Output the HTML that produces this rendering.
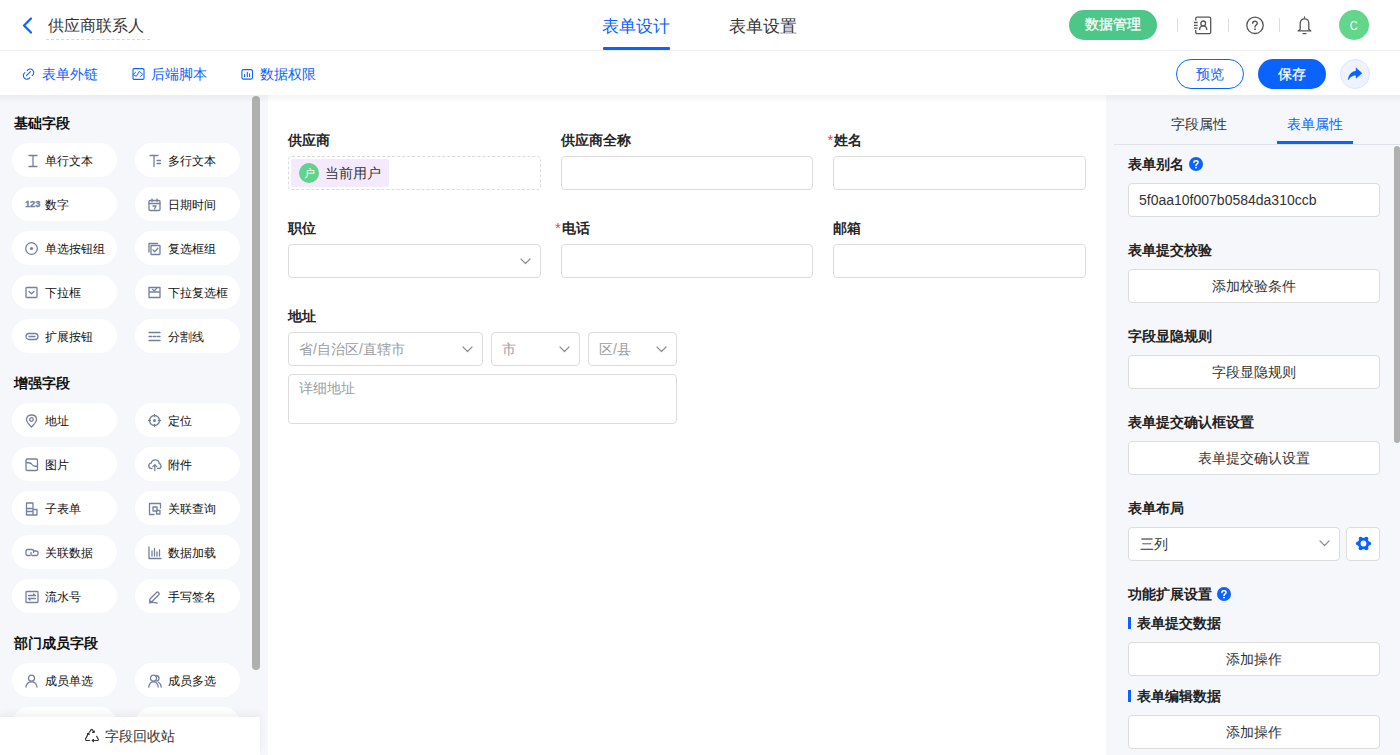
<!DOCTYPE html>
<html><head><meta charset="utf-8">
<style>
*{box-sizing:border-box;margin:0;padding:0}
html,body{width:1400px;height:755px;overflow:hidden;background:#fff;font-family:"Liberation Sans",sans-serif;color:#333}
.a{position:absolute}
svg{display:block;overflow:visible}
.nw{white-space:nowrap}
.blue{color:#0a62ff}
.sep{width:1px;height:14px;background:#dddddd;top:18px}
.sec{font-size:14px;font-weight:bold;color:#111;left:14px;line-height:18px;white-space:nowrap}
.pill{width:105px;height:34px;border-radius:17px;background:#fff}
.ptx{font-size:12.2px;line-height:16px;color:#111;white-space:nowrap}
.lab{font-size:14px;font-weight:bold;color:#262626;line-height:18px;white-space:nowrap}
.req{color:#e8463f;font-weight:normal;display:inline-block;width:6.5px;font-size:15px}
.inp{height:34px;border:1px solid #dcdcdc;border-radius:4px;background:#fff}
.ph{font-size:14px;line-height:18px;color:#9a9da3;white-space:nowrap}
.rl{font-size:14px;font-weight:bold;color:#222;left:1128px;line-height:18px;white-space:nowrap}
.rbtn{left:1128px;width:252px;height:34px;border:1px solid #dddddd;border-radius:4px;background:#fff;font-size:14px;line-height:32px;text-align:center;color:#333}
</style></head><body>

<div class="a" style="left:0;top:0;width:1400px;height:51px;background:#fff;border-bottom:1px solid #eceef2"></div>
<svg class="a" style="left:21px;top:17px" width="12" height="17" viewBox="0 0 12 17"><path d="M10 1.5 L3 8.5 L10 15.5" fill="none" stroke="#0a62ff" stroke-width="2.2" stroke-linecap="round" stroke-linejoin="round"/></svg>
<div class="a nw" style="left:48px;top:16px;font-size:16px;line-height:20px;color:#333">供应商联系人</div>
<div class="a" style="left:46px;top:39px;width:104px;height:0;border-top:1px dashed #d4d7dd"></div>
<div class="a nw blue" style="left:602px;top:17px;font-size:17px;line-height:20px">表单设计</div>
<div class="a" style="left:603px;top:47px;width:67px;height:3px;border-radius:1px;background:#0a62ff"></div>
<div class="a nw" style="left:729px;top:17px;font-size:17px;line-height:20px;color:#333">表单设置</div>
<div class="a" style="left:1069px;top:10px;width:88px;height:30px;border-radius:15px;background:#4cc788;color:#fff;font-size:14px;line-height:29px;text-align:center;-webkit-text-stroke:0.3px #fff">数据管理</div>
<div class="a sep" style="left:1177px"></div>
<div class="a sep" style="left:1228px"></div>
<div class="a sep" style="left:1279px"></div>
<svg class="a" style="left:1193px;top:16px" width="19" height="19" viewBox="0 0 19 19"><path d="M2.75 4.5 V2.5 C2.75 1.7 3.4 1.1 4.2 1.1 H16.3 C17.1 1.1 17.7 1.7 17.7 2.5 V16.3 C17.7 17.1 17.1 17.7 16.3 17.7 H4.2 C3.4 17.7 2.75 17.1 2.75 16.3 V14" fill="none" stroke="#555" stroke-width="1.3"/><circle cx="10.2" cy="7.4" r="2.4" fill="none" stroke="#555" stroke-width="1.3"/><path d="M6.6 14 C6.6 11.3 8.2 9.9 10.2 9.9 C12.2 9.9 13.8 11.3 13.8 14" fill="none" stroke="#555" stroke-width="1.3"/><path d="M1 6.5h3.6M1 9.4h3.6M1 12.2h3.6" stroke="#555" stroke-width="1.3"/></svg>
<svg class="a" style="left:1245px;top:16px" width="19" height="19" viewBox="0 0 19 19"><circle cx="10" cy="9.3" r="8.2" fill="none" stroke="#555" stroke-width="1.3"/><path d="M7.7 7.3 C7.7 4.6 12.3 4.6 12.3 7.2 C12.3 8.9 10 9.1 10 11" fill="none" stroke="#555" stroke-width="1.4" stroke-linecap="round"/><circle cx="10" cy="13.2" r="0.9" fill="#555"/></svg>
<svg class="a" style="left:1297px;top:16px" width="17" height="19" viewBox="0 0 17 19"><path d="M7.5 0.9 V1.8" stroke="#555" stroke-width="1.3" stroke-linecap="round"/><path d="M3.2 13.3 V7.2 C3.2 4.6 5.1 2.8 7.5 2.8 C9.9 2.8 11.8 4.6 11.8 7.2 V13.3 L13.9 14.9 H1.1 Z" fill="none" stroke="#555" stroke-width="1.3" stroke-linejoin="round"/><path d="M6 17.6 H9" stroke="#555" stroke-width="1.3" stroke-linecap="round"/></svg>
<div class="a" style="left:1339px;top:10px;width:30px;height:30px;border-radius:50%;background:#62d68a;color:#fff;font-size:13px;line-height:32px;text-align:center"><span style="display:inline-block;transform:scaleX(0.85)">C</span></div>
<svg class="a" style="left:22px;top:67px" width="13" height="13" viewBox="0 0 13 13"><path d="M5.2 3.6 A3.6 3.6 0 1 1 10.2 8.6 M2.9 5.6 A3.6 3.6 0 1 0 7.9 10.6 M4.5 8.6 L8.4 4.7" fill="none" stroke="#0a62ff" stroke-width="1.1" stroke-linecap="round"/></svg>
<div class="a nw blue" style="left:42px;top:65px;font-size:14px;line-height:18px">表单外链</div>
<svg class="a" style="left:132px;top:67px" width="13" height="13" viewBox="0 0 13 13"><rect x="1" y="1.6" width="11" height="10.8" rx="1.2" fill="none" stroke="#0a62ff" stroke-width="1.1"/><path d="M3.6 5.2 L1.3 7.4 L4.2 9.4 L7.4 4.3 L10.8 7.4 L8.5 9.4" fill="none" stroke="#0a62ff" stroke-width="1" stroke-linecap="round" stroke-linejoin="round"/></svg>
<div class="a nw blue" style="left:151px;top:65px;font-size:14px;line-height:18px">后端脚本</div>
<svg class="a" style="left:241px;top:67px" width="13" height="13" viewBox="0 0 13 13"><rect x="0.9" y="2.6" width="10.6" height="9.5" rx="1.6" fill="none" stroke="#0a62ff" stroke-width="1.1"/><path d="M3.6 7.5 V9.6 M6.3 5.4 V9.6 M8.6 6.7 V9.6" fill="none" stroke="#0a62ff" stroke-width="1.1" stroke-linecap="round"/></svg>
<div class="a nw blue" style="left:260px;top:65px;font-size:14px;line-height:18px">数据权限</div>
<div class="a" style="left:1176px;top:59px;width:68px;height:30px;border-radius:15px;border:1px solid #0a62ff;background:#fff;color:#0a62ff;font-size:14px;line-height:28px;text-align:center">预览</div>
<div class="a" style="left:1258px;top:59px;width:68px;height:30px;border-radius:15px;background:#0a62ff;color:#fff;font-size:14px;line-height:30px;text-align:center;-webkit-text-stroke:0.3px #fff">保存</div>
<div class="a" style="left:1340px;top:59px;width:30px;height:30px;border-radius:50%;background:#eef3ff;border:1px solid #dbe6ff"></div>
<svg class="a" style="left:1347px;top:66px" width="16" height="16" viewBox="0 0 16 16"><path d="M9 1.7 L15 7.3 L9 12.3 V9.2 C5.5 9.2 3 10.8 1.2 14 C1.5 8.8 4.5 5.8 9 5.1 Z" fill="#0a62ff" stroke="#0a62ff" stroke-width="0.4" stroke-linejoin="round"/></svg>
<div class="a" style="left:0;top:95px;width:268px;height:660px;background:#f5f7fa"></div>
<div class="a sec" style="top:114px">基础字段</div>
<div class="a pill" style="left:12px;top:143px"></div>
<svg class="a" style="left:25px;top:153.6px" width="14" height="14" viewBox="0 0 14 14"><path d="M4 1.5h8M4 12.5h8M8 1.5v11" fill="none" stroke="#74809d" stroke-width="1.3" stroke-linecap="round" stroke-linejoin="round"/></svg>
<div class="a ptx" style="left:45px;top:152.6px">单行文本</div>
<div class="a pill" style="left:135px;top:143px"></div>
<svg class="a" style="left:148px;top:153.6px" width="14" height="14" viewBox="0 0 14 14"><path d="M2 1.5h8M6 1.5v11M9 6.5h3.5M9 9.5h3.5" fill="none" stroke="#74809d" stroke-width="1.3" stroke-linecap="round" stroke-linejoin="round"/></svg>
<div class="a ptx" style="left:168px;top:152.6px">多行文本</div>
<div class="a pill" style="left:12px;top:187px"></div>
<svg class="a" style="left:25px;top:197.6px" width="14" height="14" viewBox="0 0 14 14"></svg>
<div class="a ptx" style="left:45px;top:196.6px">数字</div>
<div class="a pill" style="left:135px;top:187px"></div>
<svg class="a" style="left:148px;top:197.6px" width="14" height="14" viewBox="0 0 14 14"><rect x="1" y="2.5" width="11" height="10" rx="1" fill="none" stroke="#74809d" stroke-width="1.3" stroke-linecap="round" stroke-linejoin="round"/><path d="M1 5.5h11M4 1v2.5M9 1v2.5M5 8h3l-1.5 3" fill="none" stroke="#74809d" stroke-width="1.3" stroke-linecap="round" stroke-linejoin="round"/></svg>
<div class="a ptx" style="left:168px;top:196.6px">日期时间</div>
<div class="a pill" style="left:12px;top:231px"></div>
<svg class="a" style="left:25px;top:241.6px" width="14" height="14" viewBox="0 0 14 14"><circle cx="6.5" cy="6.5" r="5.8" fill="none" stroke="#74809d" stroke-width="1.3" stroke-linecap="round" stroke-linejoin="round"/><circle cx="6.5" cy="6.5" r="1.6" fill="#74809d"/></svg>
<div class="a ptx" style="left:45px;top:240.6px">单选按钮组</div>
<div class="a pill" style="left:135px;top:231px"></div>
<svg class="a" style="left:148px;top:241.6px" width="14" height="14" viewBox="0 0 14 14"><path d="M1 10V1.5h8.5" fill="none" stroke="#74809d" stroke-width="1.3" stroke-linecap="round" stroke-linejoin="round"/><rect x="3" y="3.5" width="9" height="9" rx="0.5" fill="none" stroke="#74809d" stroke-width="1.3" stroke-linecap="round" stroke-linejoin="round"/><path d="M5 8l1.7 1.7 3.2-3.5" fill="none" stroke="#74809d" stroke-width="1.3" stroke-linecap="round" stroke-linejoin="round"/></svg>
<div class="a ptx" style="left:168px;top:240.6px">复选框组</div>
<div class="a pill" style="left:12px;top:275px"></div>
<svg class="a" style="left:25px;top:285.6px" width="14" height="14" viewBox="0 0 14 14"><rect x="1" y="1.5" width="11" height="10" rx="0.8" fill="none" stroke="#74809d" stroke-width="1.3" stroke-linecap="round" stroke-linejoin="round"/><path d="M4 5.5l2.5 2.3 2.5-2.3" fill="none" stroke="#74809d" stroke-width="1.3" stroke-linecap="round" stroke-linejoin="round"/></svg>
<div class="a ptx" style="left:45px;top:284.6px">下拉框</div>
<div class="a pill" style="left:135px;top:275px"></div>
<svg class="a" style="left:148px;top:285.6px" width="14" height="14" viewBox="0 0 14 14"><path d="M1 1.5h11v4.5H1z M1 6v5.5h11V6" fill="none" stroke="#74809d" stroke-width="1.3" stroke-linecap="round" stroke-linejoin="round"/><path d="M4.5 3.5l2 1.3 2-2.5" fill="none" stroke="#74809d" stroke-width="1.3" stroke-linecap="round" stroke-linejoin="round"/></svg>
<div class="a ptx" style="left:168px;top:284.6px">下拉复选框</div>
<div class="a pill" style="left:12px;top:319px"></div>
<svg class="a" style="left:25px;top:329.6px" width="14" height="14" viewBox="0 0 14 14"><rect x="1" y="3.5" width="12" height="6" rx="3" fill="none" stroke="#74809d" stroke-width="1.3" stroke-linecap="round" stroke-linejoin="round"/><path d="M4 6.5h6" fill="none" stroke="#74809d" stroke-width="1.3" stroke-linecap="round" stroke-linejoin="round"/></svg>
<div class="a ptx" style="left:45px;top:328.6px">扩展按钮</div>
<div class="a pill" style="left:135px;top:319px"></div>
<svg class="a" style="left:148px;top:329.6px" width="14" height="14" viewBox="0 0 14 14"><path d="M1 2.5h11M1 6.5h3M5.5 6.5h2.5M9.5 6.5h2.5M1 10.5h11" fill="none" stroke="#74809d" stroke-width="1.3" stroke-linecap="round" stroke-linejoin="round"/></svg>
<div class="a ptx" style="left:168px;top:328.6px">分割线</div>
<div class="a sec" style="top:374px">增强字段</div>
<div class="a pill" style="left:12px;top:403px"></div>
<svg class="a" style="left:25px;top:413.6px" width="14" height="14" viewBox="0 0 14 14"><path d="M6.5 13 C2.5 9 1.5 7 1.5 5.5 C1.5 2.5 3.8 1 6.5 1 C9.2 1 11.5 2.5 11.5 5.5 C11.5 7 10.5 9 6.5 13Z" fill="none" stroke="#74809d" stroke-width="1.3" stroke-linecap="round" stroke-linejoin="round"/><circle cx="6.5" cy="5.5" r="1.8" fill="none" stroke="#74809d" stroke-width="1.3" stroke-linecap="round" stroke-linejoin="round"/></svg>
<div class="a ptx" style="left:45px;top:412.6px">地址</div>
<div class="a pill" style="left:135px;top:403px"></div>
<svg class="a" style="left:148px;top:413.6px" width="14" height="14" viewBox="0 0 14 14"><circle cx="6.5" cy="6.5" r="5" fill="none" stroke="#74809d" stroke-width="1.3" stroke-linecap="round" stroke-linejoin="round"/><circle cx="6.5" cy="6.5" r="1.5" fill="#74809d"/><path d="M6.5 0.5v2M6.5 10.5v2M0.5 6.5h2M10.5 6.5h2" fill="none" stroke="#74809d" stroke-width="1.3" stroke-linecap="round" stroke-linejoin="round"/></svg>
<div class="a ptx" style="left:168px;top:412.6px">定位</div>
<div class="a pill" style="left:12px;top:447px"></div>
<svg class="a" style="left:25px;top:457.6px" width="14" height="14" viewBox="0 0 14 14"><rect x="1" y="1" width="11.5" height="11.5" rx="1.2" fill="none" stroke="#74809d" stroke-width="1.3" stroke-linecap="round" stroke-linejoin="round"/><path d="M1.5 4.5 C4 4.5 6 5 7 6.5 C8 8 10 8.5 12 8" fill="none" stroke="#74809d" stroke-width="1.3" stroke-linecap="round" stroke-linejoin="round"/></svg>
<div class="a ptx" style="left:45px;top:456.6px">图片</div>
<div class="a pill" style="left:135px;top:447px"></div>
<svg class="a" style="left:148px;top:457.6px" width="14" height="14" viewBox="0 0 14 14"><path d="M4 10.5H3.5C2 10.5 0.8 9.3 0.8 7.8 C0.8 6.4 1.9 5.3 3.2 5.2 C3.6 3.2 5.3 1.8 7.2 1.8 C9.3 1.8 11 3.4 11.1 5.4 C12.3 5.7 13 6.7 13 7.9 C13 9.3 11.9 10.5 10.5 10.5H9.5M6.8 12.5V6.8M4.8 8.6l2-2 2 2" fill="none" stroke="#74809d" stroke-width="1.3" stroke-linecap="round" stroke-linejoin="round"/></svg>
<div class="a ptx" style="left:168px;top:456.6px">附件</div>
<div class="a pill" style="left:12px;top:491px"></div>
<svg class="a" style="left:25px;top:501.6px" width="14" height="14" viewBox="0 0 14 14"><path d="M1.5 1h6.5v5.5H1.5z M1.5 6.5V13H12V7.5H8V13 M1.5 9.5H8" fill="none" stroke="#74809d" stroke-width="1.3" stroke-linecap="round" stroke-linejoin="round"/></svg>
<div class="a ptx" style="left:45px;top:500.6px">子表单</div>
<div class="a pill" style="left:135px;top:491px"></div>
<svg class="a" style="left:148px;top:501.6px" width="14" height="14" viewBox="0 0 14 14"><path d="M12.5 6V1.5H1.5V12.5H6" fill="none" stroke="#74809d" stroke-width="1.3" stroke-linecap="round" stroke-linejoin="round"/><rect x="5" y="5" width="4" height="4" fill="none" stroke="#74809d" stroke-width="1.3" stroke-linecap="round" stroke-linejoin="round"/><rect x="8.5" y="8.5" width="3.5" height="3.5" fill="none" stroke="#74809d" stroke-width="1.3" stroke-linecap="round" stroke-linejoin="round"/></svg>
<div class="a ptx" style="left:168px;top:500.6px">关联查询</div>
<div class="a pill" style="left:12px;top:535px"></div>
<svg class="a" style="left:25px;top:545.6px" width="14" height="14" viewBox="0 0 14 14"><path d="M5 9.5H2.5C1.7 9.5 1 8.8 1 8V5C1 4.2 1.7 3.5 2.5 3.5H7C7.8 3.5 8.5 4.2 8.5 5V6.5 M6 6.5V8C6 8.8 6.7 9.5 7.5 9.5H11.5C12.3 9.5 13 8.8 13 8V6.5C13 5.7 12.3 5 11.5 5H9" fill="none" stroke="#74809d" stroke-width="1.3" stroke-linecap="round" stroke-linejoin="round"/></svg>
<div class="a ptx" style="left:45px;top:544.6px">关联数据</div>
<div class="a pill" style="left:135px;top:535px"></div>
<svg class="a" style="left:148px;top:545.6px" width="14" height="14" viewBox="0 0 14 14"><path d="M1 1v11.5h12M4 5v5M6.5 2.5v7.5M9 6v4M11.5 4v6" fill="none" stroke="#74809d" stroke-width="1.3" stroke-linecap="round" stroke-linejoin="round"/></svg>
<div class="a ptx" style="left:168px;top:544.6px">数据加载</div>
<div class="a pill" style="left:12px;top:579px"></div>
<svg class="a" style="left:25px;top:589.6px" width="14" height="14" viewBox="0 0 14 14"><rect x="1" y="1.5" width="12" height="11" rx="0.8" fill="none" stroke="#74809d" stroke-width="1.3" stroke-linecap="round" stroke-linejoin="round"/><path d="M3.5 5.5h7M8.5 4l1.5 1.5M3.5 8.5h7M5 10l-1.5-1.5" fill="none" stroke="#74809d" stroke-width="1.3" stroke-linecap="round" stroke-linejoin="round"/></svg>
<div class="a ptx" style="left:45px;top:588.6px">流水号</div>
<div class="a pill" style="left:135px;top:579px"></div>
<svg class="a" style="left:148px;top:589.6px" width="14" height="14" viewBox="0 0 14 14"><path d="M1.5 11.5 L2 9 L8.5 2.5 C9 2 9.8 2 10.3 2.5 L10.8 3 C11.3 3.5 11.3 4.2 10.8 4.7 L4.3 11.2 Z M1.5 13 C4 11.8 7 12.5 9 13" fill="none" stroke="#74809d" stroke-width="1.3" stroke-linecap="round" stroke-linejoin="round"/></svg>
<div class="a ptx" style="left:168px;top:588.6px">手写签名</div>
<div class="a sec" style="top:634px">部门成员字段</div>
<div class="a pill" style="left:12px;top:663px"></div>
<svg class="a" style="left:25px;top:673.6px" width="14" height="14" viewBox="0 0 14 14"><circle cx="6.5" cy="4.2" r="3" fill="none" stroke="#74809d" stroke-width="1.3" stroke-linecap="round" stroke-linejoin="round"/><path d="M1 13 C1.5 9 4 7.8 6.5 7.8 C9 7.8 11.5 9 12 13" fill="none" stroke="#74809d" stroke-width="1.3" stroke-linecap="round" stroke-linejoin="round"/></svg>
<div class="a ptx" style="left:45px;top:672.6px">成员单选</div>
<div class="a pill" style="left:135px;top:663px"></div>
<svg class="a" style="left:148px;top:673.6px" width="14" height="14" viewBox="0 0 14 14"><circle cx="5.5" cy="4.2" r="3" fill="none" stroke="#74809d" stroke-width="1.3" stroke-linecap="round" stroke-linejoin="round"/><path d="M0.8 13 C1.2 9 3.5 7.8 5.5 7.8 C7.5 7.8 9.8 9 10.2 13 M8.5 1.5 C10.3 1.8 11 3 11 4.2 C11 5.6 10 6.8 8.8 7 M10.5 8.2 C12 9 13 10.5 13.2 13" fill="none" stroke="#74809d" stroke-width="1.3" stroke-linecap="round" stroke-linejoin="round"/></svg>
<div class="a ptx" style="left:168px;top:672.6px">成员多选</div>
<div class="a pill" style="left:12px;top:707px"></div>
<div class="a pill" style="left:135px;top:707px"></div>
<div class="a nw" style="left:25px;top:198px;font-size:9.3px;line-height:12px;font-weight:bold;color:#74809d;letter-spacing:-0.1px;-webkit-text-stroke:0.3px #74809d">123</div>
<div class="a" style="left:252px;top:96px;width:8px;height:574px;border-radius:4px;background:#b0b0b0"></div>
<div class="a" style="left:0;top:717px;width:260px;height:38px;background:#fff;box-shadow:0 -3px 8px rgba(0,0,0,0.06)"></div>
<svg class="a" style="left:84px;top:727px" width="16" height="16" viewBox="0 0 16 16"><path d="M5.6 5 L7.1 2.6 C7.4 2.1 8 2.1 8.3 2.6 L9.9 5.3 M8.6 5.4 L10 5.5 L10.4 4.2 M4.6 6.1 L1.6 11.8 C1.3 12.4 1.7 13.5 2.4 13.5 H5.6 M3.4 6.9 L4.7 6.2 L5.3 7.4 M8.4 13.5 H13.6 C14.3 13.5 14.6 12.8 14.3 12.2 L12.6 9.3 M9.4 12.5 L8.3 13.5 L9.4 14.5" fill="none" stroke="#333" stroke-width="1.2" stroke-linecap="round" stroke-linejoin="round"/></svg>
<div class="a nw" style="left:105px;top:727px;font-size:14px;line-height:18px;color:#333">字段回收站</div>
<div class="a" style="left:268px;top:95px;width:838px;height:660px;background:#fff"></div>
<div class="a lab" style="left:288px;top:131px">供应商</div>
<div class="a lab" style="left:561px;top:131px">供应商全称</div>
<div class="a lab" style="left:827.5px;top:131px"><span class="req">*</span>姓名</div>
<div class="a" style="left:288px;top:156px;width:253px;height:34px;border:1px dashed #d9dbe0;border-radius:4px"></div>
<div class="a" style="left:291px;top:159px;width:98px;height:28px;border-radius:2px;background:#f5eafd"></div>
<div class="a" style="left:299px;top:163px;width:20px;height:20px;border-radius:50%;background:#5fd38a;color:#fff;font-size:11px;line-height:20px;text-align:center">户</div>
<div class="a nw" style="left:325px;top:164px;font-size:14px;line-height:18px;color:#333">当前用户</div>
<div class="a inp" style="left:561px;top:156px;width:252px"></div>
<div class="a inp" style="left:833px;top:156px;width:253px"></div>
<div class="a lab" style="left:288px;top:219px">职位</div>
<div class="a lab" style="left:555px;top:219px"><span class="req">*</span>电话</div>
<div class="a lab" style="left:833px;top:219px">邮箱</div>
<div class="a inp" style="left:288px;top:244px;width:253px"></div>
<svg class="a" style="left:520px;top:258px" width="11" height="7" viewBox="0 0 11 7"><path d="M1 1 L5.5 5.5 L10 1" fill="none" stroke="#8c9099" stroke-width="1.2" stroke-linecap="round" stroke-linejoin="round"/></svg>
<div class="a inp" style="left:561px;top:244px;width:252px"></div>
<div class="a inp" style="left:833px;top:244px;width:253px"></div>
<div class="a lab" style="left:288px;top:307px">地址</div>
<div class="a inp" style="left:288px;top:332px;width:195px"></div>
<div class="a ph" style="left:299px;top:340px">省/自治区/直辖市</div>
<svg class="a" style="left:462px;top:346px" width="11" height="7" viewBox="0 0 11 7"><path d="M1 1 L5.5 5.5 L10 1" fill="none" stroke="#8c9099" stroke-width="1.2" stroke-linecap="round" stroke-linejoin="round"/></svg>
<div class="a inp" style="left:491px;top:332px;width:89px"></div>
<div class="a ph" style="left:502px;top:340px">市</div>
<svg class="a" style="left:559px;top:346px" width="11" height="7" viewBox="0 0 11 7"><path d="M1 1 L5.5 5.5 L10 1" fill="none" stroke="#8c9099" stroke-width="1.2" stroke-linecap="round" stroke-linejoin="round"/></svg>
<div class="a inp" style="left:588px;top:332px;width:89px"></div>
<div class="a ph" style="left:599px;top:340px">区/县</div>
<svg class="a" style="left:656px;top:346px" width="11" height="7" viewBox="0 0 11 7"><path d="M1 1 L5.5 5.5 L10 1" fill="none" stroke="#8c9099" stroke-width="1.2" stroke-linecap="round" stroke-linejoin="round"/></svg>
<div class="a inp" style="left:288px;top:374px;width:389px;height:50px"></div>
<div class="a ph" style="left:299px;top:379px">详细地址</div>
<div class="a" style="left:1106px;top:95px;width:294px;height:660px;background:#f5f7fa"></div>
<div class="a nw" style="left:1171px;top:115px;font-size:14px;line-height:18px;color:#333">字段属性</div>
<div class="a nw blue" style="left:1287px;top:115px;font-size:14px;line-height:18px">表单属性</div>
<div class="a" style="left:1114px;top:144px;width:286px;height:1px;background:#dfe2e8"></div>
<div class="a" style="left:1277px;top:141px;width:76px;height:3px;background:#0a62ff"></div>
<div class="a rl" style="top:155px">表单别名</div>
<svg class="a" style="left:1189px;top:157px" width="14" height="14" viewBox="0 0 14 14"><circle cx="7" cy="7" r="7" fill="#0a62ff"/><path d="M4.9 5.4 C4.9 3.2 9.1 3.2 9.1 5.4 C9.1 6.8 7 6.9 7 8.4" fill="none" stroke="#fff" stroke-width="1.5" stroke-linecap="round"/><circle cx="7" cy="10.6" r="0.95" fill="#fff"/></svg>
<div class="a" style="left:1128px;top:183px;width:252px;height:34px;border:1px solid #dddddd;border-radius:4px;background:#fff"></div>
<div class="a nw" style="left:1139px;top:191px;font-size:14px;line-height:18px;color:#333">5f0aa10f007b0584da310ccb</div>
<div class="a rl" style="top:241px">表单提交校验</div>
<div class="a rbtn" style="top:269px">添加校验条件</div>
<div class="a rl" style="top:327px">字段显隐规则</div>
<div class="a rbtn" style="top:355px">字段显隐规则</div>
<div class="a rl" style="top:413px">表单提交确认框设置</div>
<div class="a rbtn" style="top:441px">表单提交确认设置</div>
<div class="a rl" style="top:499px">表单布局</div>
<div class="a" style="left:1128px;top:527px;width:212px;height:34px;border:1px solid #dddddd;border-radius:4px;background:#fff"></div>
<div class="a nw" style="left:1140px;top:535px;font-size:14px;line-height:18px;color:#333">三列</div>
<svg class="a" style="left:1319px;top:540px" width="11" height="7" viewBox="0 0 11 7"><path d="M1 1 L5.5 5.5 L10 1" fill="none" stroke="#8c9099" stroke-width="1.2" stroke-linecap="round" stroke-linejoin="round"/></svg>
<div class="a" style="left:1346px;top:527px;width:34px;height:34px;border:1px solid #dddddd;border-radius:4px;background:#fff"></div>
<svg class="a" style="left:1355.7px;top:537px" width="15" height="13" viewBox="0 0 15 13"><circle cx="7.5" cy="6.5" r="5.7" fill="#0a62ff"/><circle cx="13.00" cy="6.50" r="2.1" fill="#0a62ff"/><circle cx="10.25" cy="1.74" r="2.1" fill="#0a62ff"/><circle cx="4.75" cy="1.74" r="2.1" fill="#0a62ff"/><circle cx="2.00" cy="6.50" r="2.1" fill="#0a62ff"/><circle cx="4.75" cy="11.26" r="2.1" fill="#0a62ff"/><circle cx="10.25" cy="11.26" r="2.1" fill="#0a62ff"/><circle cx="7.5" cy="6.5" r="2.9" fill="#fff"/></svg>
<div class="a rl" style="top:585px">功能扩展设置</div>
<svg class="a" style="left:1217px;top:587px" width="14" height="14" viewBox="0 0 14 14"><circle cx="7" cy="7" r="7" fill="#0a62ff"/><path d="M4.9 5.4 C4.9 3.2 9.1 3.2 9.1 5.4 C9.1 6.8 7 6.9 7 8.4" fill="none" stroke="#fff" stroke-width="1.5" stroke-linecap="round"/><circle cx="7" cy="10.6" r="0.95" fill="#fff"/></svg>
<div class="a" style="left:1128px;top:617px;width:3px;height:12px;background:#0a62ff"></div>
<div class="a rl" style="left:1137px;top:614px">表单提交数据</div>
<div class="a rbtn" style="top:642px">添加操作</div>
<div class="a" style="left:1128px;top:690px;width:3px;height:12px;background:#0a62ff"></div>
<div class="a rl" style="left:1137px;top:687px">表单编辑数据</div>
<div class="a rbtn" style="top:715px">添加操作</div>
<div class="a" style="left:1394px;top:146px;width:6px;height:297px;border-radius:3px;background:#b0b0b0"></div>
<div class="a" style="left:0;top:95px;width:1400px;height:8px;background:linear-gradient(rgba(0,0,0,0.045),rgba(0,0,0,0))"></div>
</body></html>
